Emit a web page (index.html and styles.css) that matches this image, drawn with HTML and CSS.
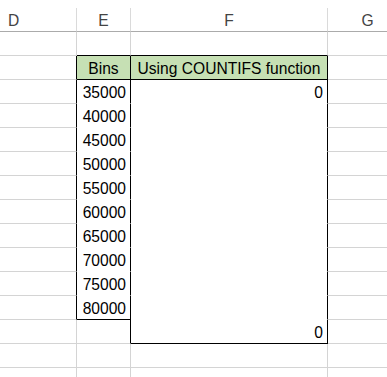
FILE: index.html
```html
<!DOCTYPE html>
<html>
<head>
<meta charset="utf-8">
<link rel="stylesheet" href="styles.css">
</head>
<body>
<div class="sheet">
  <div class="colheads">
    <div class="ch">D</div>
    <div class="ch">E</div>
    <div class="ch">F</div>
    <div class="ch last">G</div>
  </div>
  <div class="grid">
    <!-- row 1 -->
    <div class="c"></div><div class="c tt"></div><div class="c tt"></div><div class="c"></div>
    <!-- row 2 header -->
    <div class="c lb"></div><div class="c hd rb bb">Bins</div><div class="c hd rb bb">Using COUNTIFS function</div><div class="c"></div>
    <!-- data rows -->
    <div class="c lb"></div><div class="c num rb nb">35000</div><div class="c num rb nb">0</div><div class="c"></div>
    <div class="c lb"></div><div class="c num rb nb">40000</div><div class="c rb nb"></div><div class="c"></div>
    <div class="c lb"></div><div class="c num rb nb">45000</div><div class="c rb nb"></div><div class="c"></div>
    <div class="c lb"></div><div class="c num rb nb">50000</div><div class="c rb nb"></div><div class="c"></div>
    <div class="c lb"></div><div class="c num rb nb">55000</div><div class="c rb nb"></div><div class="c"></div>
    <div class="c lb"></div><div class="c num rb nb">60000</div><div class="c rb nb"></div><div class="c"></div>
    <div class="c lb"></div><div class="c num rb nb">65000</div><div class="c rb nb"></div><div class="c"></div>
    <div class="c lb"></div><div class="c num rb nb">70000</div><div class="c rb nb"></div><div class="c"></div>
    <div class="c lb"></div><div class="c num rb nb">75000</div><div class="c rb nb"></div><div class="c"></div>
    <div class="c lb"></div><div class="c num rb bb">80000</div><div class="c rb nb"></div><div class="c"></div>
    <!-- total row -->
    <div class="c"></div><div class="c rb"></div><div class="c num rb bb">0</div><div class="c"></div>
    <div class="c"></div><div class="c"></div><div class="c"></div><div class="c"></div>
    <div class="c"></div><div class="c"></div><div class="c"></div><div class="c"></div>
  </div>
</div>
</body>
</html>
```

FILE: styles.css
```css
html, body {
  margin: 0;
  padding: 0;
  background: #ffffff;
  overflow: hidden;
}

.sheet {
  width: 387px;
  height: 377px;
  overflow: hidden;
  font-family: "Liberation Sans", Arial, sans-serif;
  font-size: 15.6px;
}

.colheads {
  display: grid;
  grid-template-columns: 77px 54px 197px 80px;
  padding-top: 8px;
}

.ch {
  box-sizing: border-box;
  height: 24px;
  line-height: 23px;
  padding-top: 1px;
  text-align: center;
  color: #444444;
  border-right: 1px solid #dadada;
  border-bottom: 1px solid #ababab;
}

.ch:first-child {
  text-align: left;
  padding-left: 8px;
}

.ch.last {
  text-align: center;
}

.grid {
  display: grid;
  grid-template-columns: 77px 54px 197px 80px;
  grid-auto-rows: 24px;
}

.c {
  box-sizing: border-box;
  height: 24px;
  line-height: 23px;
  padding-top: 1px;
  color: #000000;
  border-right: 1px solid #d4d4d4;
  border-bottom: 1px solid #d4d4d4;
  white-space: nowrap;
}

.tt { border-bottom-color: #000000; }
.lb { border-right-color: #000000; }
.rb { border-right-color: #000000; }
.bb { border-bottom-color: #000000; }
.nb { border-bottom-color: #ffffff; }

.hd {
  background: #c6e0b4;
  text-align: center;
}

.num {
  text-align: right;
  padding-right: 4px;
}
```
